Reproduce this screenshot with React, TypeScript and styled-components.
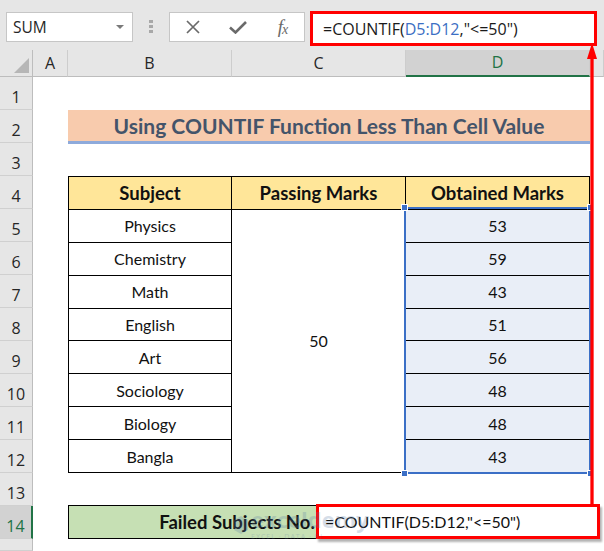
import { Fragment } from "react";
import styled, { createGlobalStyle, css } from "styled-components";

const UI = `"Open Sans", "Noto Sans", sans-serif`;
const CELL = `Lato, "Liberation Sans", sans-serif`;
const GREEN = "#217346";
const SEL = "#3b6fc6";

const GlobalStyle = createGlobalStyle`
  html, body { margin: 0; padding: 0; background: #fff; }
  body { width: 604px; height: 551px; overflow: hidden; }
`;

const Page = styled.div`
  position: relative;
  width: 604px;
  height: 551px;
  overflow: hidden;
  background: #fff;
  display: flex;
  flex-direction: column;
`;

/* ---------- formula bar ---------- */

const Toolbar = styled.div`
  flex: none;
  height: 50px;
  box-sizing: border-box;
  padding: 12px 0 0 6px;
  background: #e6e6e6;
  display: flex;
  align-items: flex-start;
`;

const NameBox = styled.div`
  width: 127px;
  height: 30px;
  box-sizing: border-box;
  padding: 0 8px 0 6px;
  background: #fff;
  border: 1px solid #c6c6c6;
  display: flex;
  align-items: center;
  justify-content: space-between;
  font: 15.5px ${UI};
  color: #262626;
`;

const Caret = styled.span`
  width: 0;
  height: 0;
  border-left: 4px solid transparent;
  border-right: 4px solid transparent;
  border-top: 4px solid #7a7a7a;
`;

const Grip = styled.div`
  margin: 8px 0 0 16px;
  display: flex;
  flex-direction: column;
  gap: 2px;

  i {
    display: block;
    width: 4px;
    height: 3px;
    background: #a8a8a8;
  }
`;

const FxBox = styled.div`
  margin-left: 16px;
  width: 136px;
  height: 30px;
  box-sizing: border-box;
  background: #fff;
  border: 1px solid #c6c6c6;
  display: grid;
  grid-template-columns: 45px 45px 45px;
  align-items: center;
  justify-items: center;
`;

const FxText = styled.span`
  font: italic 19px "Liberation Serif", serif;
  color: #6a6a6a;
  letter-spacing: -1px;

  sub {
    font-size: 14px;
    vertical-align: -1px;
  }
`;

const FormulaInput = styled.div`
  margin: -1px 0 0 5px;
  width: 287px;
  height: 35px;
  box-sizing: border-box;
  padding-left: 10px;
  background: #fff;
  border: 3px solid #ff0000;
  display: flex;
  align-items: center;
  font: 16px ${UI};
  color: #1a1a1a;
  white-space: nowrap;
`;

const Ref = styled.span`
  color: #3c6fc4;
`;

/* ---------- sheet ---------- */

const Sheet = styled.div`
  flex: 1;
  display: grid;
  grid-template-columns: 33px 35px 164px 174px 184px 1fr;
  grid-template-rows: 27px repeat(14, 33px) 1fr;
`;

const Corner = styled.div`
  grid-row: 1;
  grid-column: 1;
  background: #e6e6e6;
  border-right: 1px solid #bdbdbd;
  border-bottom: 1px solid #bdbdbd;
  position: relative;

  &::after {
    content: "";
    position: absolute;
    right: 3px;
    bottom: 3px;
    width: 15px;
    height: 15px;
    background: #b6b6b6;
    clip-path: polygon(100% 0, 100% 100%, 0 100%);
  }
`;

const ColHeader = styled.div<{ $col: number; $active?: boolean }>`
  grid-row: 1;
  grid-column: ${(p) => p.$col};
  box-sizing: border-box;
  padding-bottom: 2px;
  background: #e6e6e6;
  border-bottom: 1px solid #bdbdbd;
  border-right: 1px solid #cdcdcd;
  display: flex;
  align-items: flex-end;
  justify-content: center;
  font: 16px ${UI};
  color: #262626;
  ${(p) =>
    p.$active &&
    css`
      background: #d2d2d2;
      border-bottom: 2px solid ${GREEN};
      color: ${GREEN};
    `}
`;

const RowHeader = styled.div<{ $row: number; $active?: boolean }>`
  grid-column: 1;
  grid-row: ${(p) => p.$row + 1};
  box-sizing: border-box;
  padding-top: 8px;
  background: #e6e6e6;
  border-bottom: 1px solid #d0d0d0;
  border-right: 1px solid #bdbdbd;
  display: flex;
  align-items: center;
  justify-content: center;
  font: 16px ${UI};
  color: #262626;
  ${(p) =>
    p.$active &&
    css`
      background: #d2d2d2;
      border-right: 2px solid ${GREEN};
      color: ${GREEN};
    `}
`;

const Title = styled.div`
  grid-row: 3;
  grid-column: 3 / 6;
  align-self: start;
  height: 34px;
  box-sizing: border-box;
  background: #f8cbad;
  border-bottom: 3px solid #8eaadb;
  display: flex;
  align-items: center;
  justify-content: center;
  font: bold 21px ${CELL};
  color: #44546a;
`;

const Table = styled.div`
  grid-row: 5 / 14;
  grid-column: 3 / 6;
  display: grid;
  grid-template-columns: 162px 173px 1fr;
  grid-template-rows: repeat(9, 1fr);
  gap: 1px;
  background: #000;
  border: 1px solid #000;
`;

const TCell = styled.div<{ $kind?: "head" | "mark"; $col: number; $row: string }>`
  grid-column: ${(p) => p.$col};
  grid-row: ${(p) => p.$row};
  display: flex;
  align-items: center;
  justify-content: center;
  background: #fff;
  font: 16px ${CELL};
  color: #111;
  ${(p) =>
    p.$kind === "head" &&
    css`
      background: #ffe699;
      font-weight: bold;
      font-size: 18.5px;
    `}
  ${(p) => p.$kind === "mark" && css`background: #e9eef7;`}
`;

const Selection = styled.div`
  grid-row: 6 / 14;
  grid-column: 5;
  margin: -2px -1px -1px -2px;
  border: 2px solid ${SEL};
  position: relative;
  z-index: 2;
  pointer-events: none;
`;

const Handle = styled.span<{ $pos: "tl" | "tr" | "bl" | "br" }>`
  position: absolute;
  width: 5px;
  height: 5px;
  background: ${SEL};
  outline: 1px solid #fff;
  ${(p) => (p.$pos[0] === "t" ? "top: -4px;" : "bottom: -4px;")}
  ${(p) => (p.$pos[1] === "l" ? "left: -4px;" : "right: -4px;")}
`;

const FailedCell = styled.div`
  grid-row: 15;
  grid-column: 3 / 5;
  align-self: start;
  height: 34px;
  margin-top: -1px;
  box-sizing: border-box;
  background: #c6e0b4;
  border: 1px solid #000;
  display: flex;
  align-items: center;
  justify-content: center;
  font: bold 18.5px ${CELL};
  color: #111;
`;

const EditCell = styled.div`
  grid-row: 15;
  grid-column: 5;
  position: relative;
`;

const EditBox = styled.div`
  position: absolute;
  left: -90px;
  top: -2px;
  width: 284px;
  height: 35px;
  box-sizing: border-box;
  padding-left: 6px;
  background: #fff;
  border: 3px solid #ff0000;
  box-shadow: 2px 3px 2px rgba(0, 0, 0, 0.3);
  display: flex;
  align-items: center;
  font: 16px ${CELL};
  color: #111;
  white-space: nowrap;
  z-index: 3;
`;

const Watermark = styled.div`
  position: absolute;
  left: 233px;
  top: 508px;
  z-index: 5;
  display: flex;
  align-items: center;
  gap: 2px;
  pointer-events: none;
  opacity: 0.25;
  color: #5a7da8;

  b {
    font: bold 22px ${UI};
    line-height: 1;
  }
  small {
    display: block;
    font: 7px ${UI};
    letter-spacing: 1px;
  }
`;

const Arrow = styled.svg`
  position: absolute;
  left: 584px;
  top: 43px;
  z-index: 4;
`;

const subjects = ["Physics", "Chemistry", "Math", "English", "Art", "Sociology", "Biology", "Bangla"];
const marks = [53, 59, 43, 51, 56, 48, 48, 43];

export default function App() {
  const rows = Array.from({ length: 14 }, (_, i) => i + 1);
  return (
    <Page>
      <GlobalStyle />
      <Toolbar>
        <NameBox>
          <span>SUM</span>
          <Caret />
        </NameBox>
        <Grip>
          <i />
          <i />
          <i />
        </Grip>
        <FxBox>
          <svg width="16" height="14" viewBox="0 0 16 14">
            <path d="M2 1 L14 13 M14 1 L2 13" stroke="#6a6a6a" strokeWidth="1.7" fill="none" />
          </svg>
          <svg width="18" height="13" viewBox="0 0 18 13">
            <path d="M1 6.5 L6.5 11.5 L17 1" stroke="#6a6a6a" strokeWidth="2.6" fill="none" />
          </svg>
          <FxText>
            f<sub>x</sub>
          </FxText>
        </FxBox>
        <FormulaInput>
          =COUNTIF(<Ref>D5:D12</Ref>,"&lt;=50")
        </FormulaInput>
      </Toolbar>

      <Sheet>
        <Corner />
        {["A", "B", "C", "D", ""].map((c, i) => (
          <ColHeader key={i} $col={i + 2} $active={c === "D"}>
            {c}
          </ColHeader>
        ))}
        {rows.map((r) => (
          <RowHeader key={r} $row={r} $active={r === 14}>
            {r}
          </RowHeader>
        ))}
        <RowHeader $row={15} />

        <Title>Using COUNTIF Function Less Than Cell Value</Title>

        <Table>
          <TCell $kind="head" $col={1} $row="1">Subject</TCell>
          <TCell $kind="head" $col={2} $row="1">Passing Marks</TCell>
          <TCell $kind="head" $col={3} $row="1">Obtained Marks</TCell>
          {subjects.map((s, i) => (
            <Fragment key={s}>
              <TCell $col={1} $row={String(i + 2)}>{s}</TCell>
              <TCell $kind="mark" $col={3} $row={String(i + 2)}>
                {marks[i]}
              </TCell>
            </Fragment>
          ))}
          <TCell $col={2} $row="2 / 10">50</TCell>
        </Table>

        <Selection>
          <Handle $pos="tl" />
          <Handle $pos="tr" />
          <Handle $pos="bl" />
          <Handle $pos="br" />
        </Selection>

        <FailedCell>Failed Subjects No.</FailedCell>
        <EditCell>
          <EditBox>=COUNTIF(D5:D12,"&lt;=50")</EditBox>
        </EditCell>
      </Sheet>

      <Watermark>
        <svg width="16" height="20" viewBox="0 0 16 20">
          <path d="M8 1 L15 5 L15 15 L8 19 L1 15 L1 5 Z" fill="currentColor" />
        </svg>
        <div>
          <b>exceldemy</b>
          <small>EXCEL · DATA · BI</small>
        </div>
      </Watermark>

      <Arrow width="16" height="462" viewBox="0 0 16 462">
        <line x1="8" y1="12" x2="8" y2="462" stroke="#ff0000" strokeWidth="3.3" />
        <polygon points="3,16 8,0 13,16" fill="#ff0000" />
      </Arrow>
    </Page>
  );
}
